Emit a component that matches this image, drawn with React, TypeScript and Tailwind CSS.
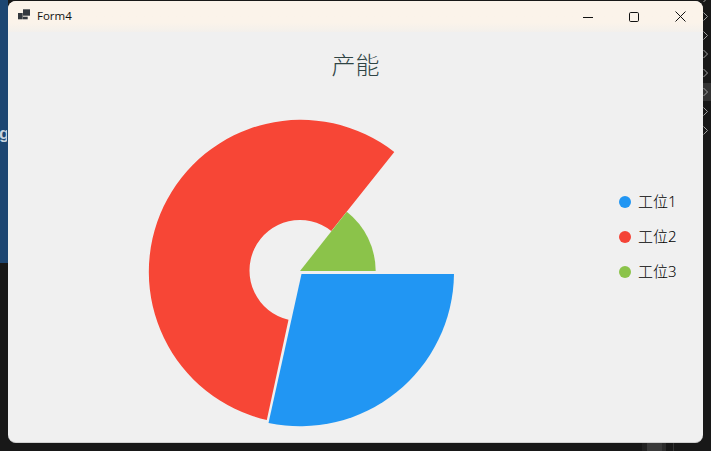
const chevrons = [-2, 16.5, 35.5, 54, 73, 92, 111.5, 130.5];
const legend = [
  { name: "工位1", dot: "bg-[#2196f3]" },
  { name: "工位2", dot: "bg-[#f44336]" },
  { name: "工位3", dot: "bg-[#8bc34a]" },
];

export default function App() {
  return (
    <div className="w-[711px] h-[451px] flex bg-[#181818] overflow-hidden font-['Noto_Sans','Noto_Sans_CJK_SC',sans-serif]">
      {/* desktop behind, left */}
      <div className="w-[8px] shrink-0 flex flex-col overflow-hidden">
        <div className="h-[263px] bg-[#1d4672] pt-[124px] text-[17px] leading-[20px] font-bold text-[#c8d3df] font-['Liberation_Sans',sans-serif]">
          <div className="w-[8px] overflow-hidden -ml-[1px]">g</div>
        </div>
      </div>

      <div className="w-[695px] shrink-0 flex flex-col">
        {/* window */}
        <div className="h-[442px] mt-[1px] shrink-0 flex flex-col rounded-[8px] bg-[#f0f0f0] overflow-hidden border-b border-[#d0d0d0]">
          <div className="h-[31px] shrink-0 flex items-center bg-gradient-to-b from-[#fbf3ea] from-70% to-[#f3f0ec] text-[#111]">
            <svg width="13" height="12" viewBox="0 0 13 12" className="ml-[10px] mr-[6px] mb-[4px]" fill="#33383f">
              <rect x="0" y="4" width="4.7" height="6.3" />
              <rect x="5" y="0.3" width="7" height="6.4" />
              <rect x="5" y="7.7" width="4.7" height="2.6" />
            </svg>
            <span className="text-[11.5px] leading-[16px] mb-[2px] font-['Open_Sans',sans-serif]">Form4</span>
            <div className="ml-auto flex h-full items-center">
              <div className="w-[46px] h-full flex items-center justify-center">
                <svg width="10" height="10" viewBox="0 0 10 10"><path d="M0 5.5H10" stroke="#111" strokeWidth="1" /></svg>
              </div>
              <div className="w-[46px] h-full flex items-center justify-center">
                <svg width="10" height="10" viewBox="0 0 10 10"><rect x="0.5" y="0.5" width="9" height="9" rx="1.2" fill="none" stroke="#111" strokeWidth="1" /></svg>
              </div>
              <div className="w-[46px] h-full flex items-center justify-center">
                <svg width="11" height="11" viewBox="0 0 11 11"><path d="M0.5 0.5L10.5 10.5M10.5 0.5L0.5 10.5" stroke="#111" strokeWidth="1" /></svg>
              </div>
            </div>
          </div>

          <div className="h-[50px] shrink-0 pt-[16px] text-center text-[24px] leading-[34px] font-light text-[#2f4444]">产能</div>

          <div className="flex mt-[11px]">
            {/* chart: viewBox uses page coordinates */}
            <svg width="600" height="345" viewBox="8 93 600 345" className="shrink-0">
              <path
                d="M394.3 152 A152 152 0 1 0 266.8 420 L288.5 319.7 A50.5 50.5 0 1 1 331.3 230.9 Z"
                fill="#f74636"
              />
              <path d="M300 271 L346.8 211.8 A75.5 75.5 0 0 1 375.7 271 Z" fill="#8bc34a" />
              <path d="M301.5 274 L454 274 A154 154 0 0 1 268.5 423 Z" fill="#2196f3" />
            </svg>

            <div className="flex flex-col gap-[16px] pl-[11px] mt-[99px]">
              {legend.map((l) => (
                <div key={l.name} className="flex items-center h-[19px] text-[15px] font-light text-[#000]">
                  <span className={`w-[12px] h-[12px] rounded-full ${l.dot} mr-[7px]`} />
                  {l.name}
                </div>
              ))}
            </div>
          </div>
        </div>

        {/* taskbar-like strip below the window */}
        <div className="flex-1 flex">
          <div className="w-[634px] shrink-0" />
          <div className="w-[5px] bg-[#222]" />
          <div className="w-[15px] bg-[#3a3a3a]" />
          <div className="w-[4px] bg-[#2c2c2c]" />
          <div className="w-[7px]" />
          <div className="w-[1px] bg-[#333]" />
        </div>
      </div>

      {/* editor behind, right */}
      <div className="w-[8px] shrink-0 flex flex-col">
        <svg width="8" height="140" viewBox="0 0 8 140">
          <rect x="0" y="83" width="8" height="18" fill="#333" />
          {chevrons.map((y) => (
            <path key={y} d={`M0.5 ${y - 4} L4.5 ${y} L0.5 ${y + 4}`} fill="none" stroke="#a0a0a0" strokeWidth="1" />
          ))}
        </svg>
      </div>
    </div>
  );
}
